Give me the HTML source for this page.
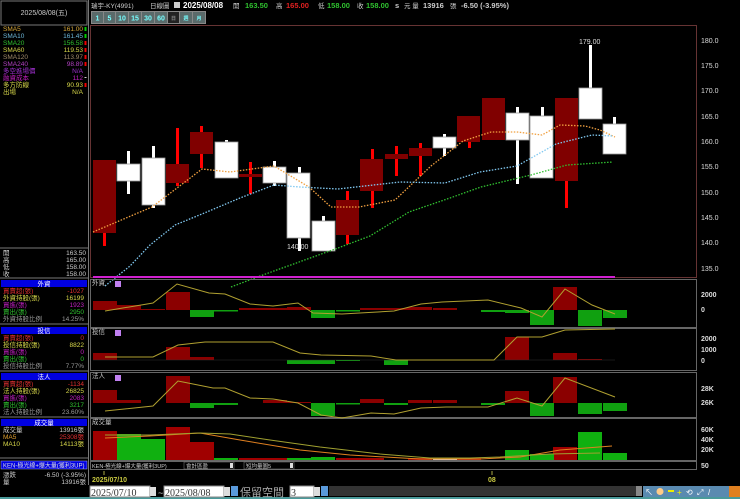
<!DOCTYPE html>
<html><head><meta charset="utf-8"><style>
body{margin:0;background:#000;width:740px;height:499px;overflow:hidden;font-family:"Liberation Sans","Noto Sans CJK TC",sans-serif;}
svg{position:absolute;left:0;top:0}
</style></head><body>
<svg width="740" height="499" viewBox="0 0 740 499" font-family="Liberation Sans, Noto Sans CJK TC, sans-serif">
<rect width="740" height="499" fill="#000"/>
<!-- left panel -->
<rect x="0" y="0" width="88" height="499" fill="#000"/>
<line x1="88.5" y1="0" x2="88.5" y2="485" stroke="#777"/>
<rect x="1" y="1" width="86" height="24" fill="none" stroke="#777"/>
<text x="44" y="15" fill="#ccc" font-size="7" text-anchor="middle">2025/08/08(五)</text>
<g font-size="6.5">
<text x="3" y="31" fill="#d9a93a">SMA5</text><text x="83" y="31" fill="#d9a93a" text-anchor="end">161.00</text><rect x="84.5" y="27" width="2" height="4" fill="#0c0"/>
<text x="3" y="38" fill="#6cb6d8">SMA10</text><text x="83" y="38" fill="#6cb6d8" text-anchor="end">161.45</text><rect x="84.5" y="34" width="2" height="4" fill="#0c0"/>
<text x="3" y="45" fill="#2fc02f">SMA20</text><text x="83" y="45" fill="#2fc02f" text-anchor="end">156.58</text><rect x="84.5" y="41" width="2" height="4" fill="#e00"/>
<text x="3" y="52" fill="#d8d84a">SMA60</text><text x="83" y="52" fill="#d8d84a" text-anchor="end">119.53</text><rect x="84.5" y="48" width="2" height="4" fill="#e00"/>
<text x="3" y="59" fill="#a08a6a">SMA120</text><text x="83" y="59" fill="#a08a6a" text-anchor="end">113.97</text><rect x="84.5" y="55" width="2" height="4" fill="#e00"/>
<text x="3" y="66" fill="#b040c0">SMA240</text><text x="83" y="66" fill="#b040c0" text-anchor="end">98.89</text><rect x="84.5" y="62" width="2" height="4" fill="#e00"/>
<text x="3" y="73" fill="#a030d0">多空進場價</text><text x="83" y="73" fill="#a030d0" text-anchor="end">N/A</text>
<text x="3" y="80" fill="#c020c0">融資成本</text><text x="83" y="80" fill="#c020c0" text-anchor="end">112</text><rect x="84.5" y="77" width="2" height="1" fill="#ccc"/>
<text x="3" y="87" fill="#d8d84a">多方防線</text><text x="83" y="87" fill="#d8d84a" text-anchor="end">90.93</text><rect x="84.5" y="83" width="2" height="4" fill="#e00"/>
<text x="3" y="94" fill="#d8d84a">出場</text><text x="83" y="94" fill="#d8d84a" text-anchor="end">N/A</text>
</g>
<line x1="0" y1="248" x2="88" y2="248" stroke="#777"/>
<g font-size="6.5" fill="#ccc">
<text x="3" y="255">開</text><text x="86" y="255" text-anchor="end">163.50</text>
<text x="3" y="262">高</text><text x="86" y="262" text-anchor="end">165.00</text>
<text x="3" y="269">低</text><text x="86" y="269" text-anchor="end">158.00</text>
<text x="3" y="276">收</text><text x="86" y="276" text-anchor="end">158.00</text>
</g>
<line x1="0" y1="278" x2="88" y2="278" stroke="#777"/>
<!-- sections -->
<g font-size="6.5">
<rect x="1" y="280" width="86" height="7" fill="#0000e0"/><text x="44" y="286" fill="#fff" text-anchor="middle">外資</text>
<text x="3" y="293" fill="#e03030">買賣超(張)</text><text x="84" y="293" fill="#e03030" text-anchor="end">-1027</text>
<text x="3" y="300" fill="#d8d84a">外資持股(張)</text><text x="84" y="300" fill="#d8d84a" text-anchor="end">16199</text>
<text x="3" y="307" fill="#c020c0">買進(張)</text><text x="84" y="307" fill="#c020c0" text-anchor="end">1923</text>
<text x="3" y="314" fill="#2fc02f">賣出(張)</text><text x="84" y="314" fill="#2fc02f" text-anchor="end">2950</text>
<text x="3" y="321" fill="#999">外資持股比例</text><text x="84" y="321" fill="#999" text-anchor="end">14.25%</text>
<line x1="0" y1="324" x2="88" y2="324" stroke="#777"/>
<rect x="1" y="327" width="86" height="7" fill="#0000e0"/><text x="44" y="333" fill="#fff" text-anchor="middle">投信</text>
<text x="3" y="340" fill="#e03030">買賣超(張)</text><text x="84" y="340" fill="#e03030" text-anchor="end">0</text>
<text x="3" y="347" fill="#d8d84a">投信持股(張)</text><text x="84" y="347" fill="#d8d84a" text-anchor="end">8822</text>
<text x="3" y="354" fill="#c020c0">買進(張)</text><text x="84" y="354" fill="#c020c0" text-anchor="end">0</text>
<text x="3" y="361" fill="#2fc02f">賣出(張)</text><text x="84" y="361" fill="#2fc02f" text-anchor="end">0</text>
<text x="3" y="368" fill="#999">投信持股比例</text><text x="84" y="368" fill="#999" text-anchor="end">7.77%</text>
<line x1="0" y1="371" x2="88" y2="371" stroke="#777"/>
<rect x="1" y="373" width="86" height="7" fill="#0000e0"/><text x="44" y="379" fill="#fff" text-anchor="middle">法人</text>
<text x="3" y="386" fill="#e03030">買賣超(張)</text><text x="84" y="386" fill="#e03030" text-anchor="end">-1134</text>
<text x="3" y="393" fill="#d8d84a">法人持股(張)</text><text x="84" y="393" fill="#d8d84a" text-anchor="end">26825</text>
<text x="3" y="400" fill="#c020c0">買進(張)</text><text x="84" y="400" fill="#c020c0" text-anchor="end">2083</text>
<text x="3" y="407" fill="#2fc02f">賣出(張)</text><text x="84" y="407" fill="#2fc02f" text-anchor="end">3217</text>
<text x="3" y="414" fill="#999">法人持股比例</text><text x="84" y="414" fill="#999" text-anchor="end">23.60%</text>
<line x1="0" y1="417" x2="88" y2="417" stroke="#777"/>
<rect x="1" y="419" width="86" height="7" fill="#0000e0"/><text x="44" y="425" fill="#fff" text-anchor="middle">成交量</text>
<text x="3" y="432" fill="#ccc">成交量</text><text x="84" y="432" fill="#ccc" text-anchor="end">13916張</text>
<text x="3" y="439" fill="#e0a030">MA5</text><text x="84" y="439" fill="#e03030" text-anchor="end">25308張</text>
<text x="3" y="446" fill="#d8d84a">MA10</text><text x="84" y="446" fill="#d8d84a" text-anchor="end">14113張</text>
<line x1="0" y1="458" x2="88" y2="458" stroke="#777"/>
<rect x="1" y="461" width="86" height="8" fill="#0000e0" stroke="#aaf" stroke-width="0.5"/><text x="3" y="467.5" fill="#ddd" font-size="6">KEN-極光線+爆大量(獲利3UP)</text>
<text x="3" y="477" fill="#ccc">漲跌</text><text x="86" y="477" fill="#ccc" text-anchor="end">-6.50 (-3.95%)</text>
<text x="3" y="484" fill="#ccc">量</text><text x="86" y="484" fill="#ccc" text-anchor="end">13916張</text>
</g>
<!-- header -->
<g font-size="7.5" font-weight="bold">
<text x="91" y="8" fill="#ccc" font-weight="normal" font-size="6.5">瑞宇-KY(4991)</text>
<text x="150" y="8" fill="#ccc" font-weight="normal" font-size="6.5">日線圖</text>
<rect x="174" y="2" width="6" height="6" fill="#ccc"/>
<text x="183" y="8" fill="#fff" font-size="8">2025/08/08</text>
<text x="233" y="8" fill="#ccc" font-weight="normal" font-size="6.5">開</text><text x="245" y="8" fill="#2fc02f">163.50</text>
<text x="276" y="8" fill="#ccc" font-weight="normal" font-size="6.5">高</text><text x="286" y="8" fill="#e02020">165.00</text>
<text x="318" y="8" fill="#ccc" font-weight="normal" font-size="6.5">低</text><text x="327" y="8" fill="#2fc02f">158.00</text>
<text x="357" y="8" fill="#ccc" font-weight="normal" font-size="6.5">收</text><text x="366" y="8" fill="#2fc02f">158.00</text>
<text x="395" y="8" fill="#ccc">s</text><text x="404" y="8" fill="#ccc" font-weight="normal" font-size="6.5">元 量</text>
<text x="423" y="8" fill="#ccc">13916</text><text x="450" y="8" fill="#ccc" font-weight="normal" font-size="6.5">張</text>
<text x="461" y="8" fill="#ccc">-6.50 (-3.95%)</text>
</g>
<rect x="91" y="11" width="115" height="13" fill="#888"/>
<g font-size="7" fill="#7ff" font-weight="bold" text-anchor="middle">
<rect x="92" y="12" width="11" height="11" fill="#5a6a6a"/><text x="97.5" y="20.5">1</text>
<rect x="104" y="12" width="11" height="11" fill="#5a6a6a"/><text x="109.5" y="20.5">5</text>
<rect x="116" y="12" width="12" height="11" fill="#5a6a6a"/><text x="122" y="20.5">10</text>
<rect x="129" y="12" width="12" height="11" fill="#5a6a6a"/><text x="135" y="20.5">15</text>
<rect x="142" y="12" width="12" height="11" fill="#5a6a6a"/><text x="148" y="20.5">30</text>
<rect x="155" y="12" width="12" height="11" fill="#5a6a6a"/><text x="161" y="20.5">60</text>
<rect x="168" y="12" width="11" height="11" fill="#222"/><text x="173.5" y="20" fill="#888" font-size="5">日</text>
<rect x="180" y="12" width="12" height="11" fill="#5a6a6a"/><text x="186" y="20" font-size="5">週</text>
<rect x="193" y="12" width="12" height="11" fill="#5a6a6a"/><text x="199" y="20" font-size="5">月</text>
</g>
<!-- main chart frame -->
<rect x="90.5" y="25.5" width="606" height="252" fill="none" stroke="#633"/>
<g font-size="7" fill="#ddd">
<text x="701" y="43">180.0</text><text x="701" y="68">175.0</text><text x="701" y="93">170.0</text>
<text x="701" y="119">165.0</text><text x="701" y="144">160.0</text><text x="701" y="169">155.0</text>
<text x="701" y="195">150.0</text><text x="701" y="220">145.0</text><text x="701" y="245">140.0</text><text x="701" y="271">135.0</text>
</g>
<!-- wicks -->
<g fill="#f00">
<rect x="103" y="162" width="3" height="84"/>
<rect x="176" y="128" width="3" height="58"/>
<rect x="200" y="126" width="3" height="42"/>
<rect x="249" y="162" width="3" height="32"/>
<rect x="346" y="191" width="3" height="53"/>
<rect x="371" y="149" width="3" height="59"/>
<rect x="395" y="146" width="3" height="30"/>
<rect x="419" y="143" width="3" height="33"/>
<rect x="468" y="140" width="3" height="8"/>
<rect x="565" y="160" width="3" height="48"/>
</g>
<g fill="#fff">
<rect x="127" y="151" width="3" height="43"/>
<rect x="152" y="146" width="3" height="62"/>
<rect x="225" y="140" width="3" height="10"/>
<rect x="273" y="161" width="3" height="25"/>
<rect x="298" y="167" width="3" height="84"/>
<rect x="322" y="216" width="3" height="10"/>
<rect x="443" y="134" width="3" height="22"/>
<rect x="516" y="107" width="3" height="77"/>
<rect x="541" y="107" width="3" height="10"/>
<rect x="589" y="45" width="3" height="44"/>
<rect x="613" y="117" width="3" height="8"/>
</g>
<!-- bodies -->
<g fill="#800000">
<rect x="93" y="160" width="23" height="73"/>
<rect x="166" y="164" width="23" height="19"/>
<rect x="190" y="132" width="23" height="22"/>
<rect x="239" y="174" width="23" height="3"/>
<rect x="336" y="200" width="23" height="35"/>
<rect x="360" y="159" width="23" height="32"/>
<rect x="385" y="154" width="23" height="5"/>
<rect x="409" y="148" width="23" height="8"/>
<rect x="457" y="116" width="23" height="26"/>
<rect x="482" y="98" width="23" height="42"/>
<rect x="555" y="98" width="23" height="83"/>
</g>
<g fill="#fff" stroke="#999" stroke-width="0.8">
<rect x="117" y="164" width="23" height="17"/>
<rect x="142" y="158" width="23" height="47"/>
<rect x="215" y="142" width="23" height="36"/>
<rect x="263" y="167" width="23" height="16"/>
<rect x="287" y="173" width="23" height="65"/>
<rect x="312" y="221" width="23" height="30"/>
<rect x="433" y="137" width="23" height="11"/>
<rect x="506" y="113" width="23" height="27"/>
<rect x="530" y="116" width="23" height="62"/>
<rect x="579" y="88" width="23" height="31"/>
<rect x="603" y="124" width="23" height="30"/>
</g>
<text x="579" y="44" fill="#ddd" font-size="7">179.00</text>
<text x="287" y="249" fill="#ddd" font-size="7">140.00</text>
<!-- MAs -->
<g fill="none" stroke-width="1.3" stroke-dasharray="1.5 1.5">
<polyline stroke="#f0a040" points="93,232 152,207 202,169 230,172 274,166 309,187 331,207 359,207 395,200 431,166 463,141 491,132 517,132 542,135 560,125 585,126 600,130 615,137"/>
<polyline stroke="#80c8f0" points="105,286 130,266 150,245 175,225 202,214 240,198 274,185 300,187 338,189 400,182 445,183 480,172 517,166 556,144 592,135 613,136"/>
<polyline stroke="#30c030" points="231,287 260,276 288,266 338,248 370,236 409,212 450,198 481,187 531,175 567,165 613,162"/>
</g>
<rect x="93" y="276" width="522" height="2" fill="#d020d0"/>
<!-- sub panels -->
<g stroke="#666" fill="none">
<rect x="90.5" y="279.5" width="606" height="48"/>
<rect x="90.5" y="328.5" width="606" height="42"/>
<rect x="90.5" y="372.5" width="606" height="45"/>
<rect x="90.5" y="418.5" width="606" height="42"/>
</g>
<g font-size="6.5" fill="#ccc">
<text x="92" y="285">外資</text><rect x="115" y="281" width="6" height="6" fill="#c080f0"/>
<text x="92" y="334">投信</text><rect x="115" y="330" width="6" height="6" fill="#c080f0"/>
<text x="92" y="378">法人</text><rect x="115" y="375" width="6" height="6" fill="#c080f0"/>
<text x="92" y="424">成交量</text>
</g>
<g font-size="7" fill="#ddd" font-weight="bold">
<text x="701" y="297">2000</text><text x="701" y="312">0</text>
<text x="701" y="341">2000</text><text x="701" y="352">1000</text><text x="701" y="363">0</text>
<text x="701" y="391">28K</text><text x="701" y="405">26K</text>
<text x="701" y="432">60K</text><text x="701" y="442">40K</text><text x="701" y="452">20K</text><text x="701" y="468">50</text>
</g>
<!-- 外資 bars, zero 310 -->
<g fill="#8b0000">
<rect x="93" y="301" width="24" height="9"/><rect x="117" y="305" width="24" height="5"/><rect x="141" y="309" width="24" height="1"/>
<rect x="166" y="292" width="24" height="18"/><rect x="239" y="308" width="24" height="2"/><rect x="263" y="308" width="24" height="2"/>
<rect x="287" y="307" width="24" height="3"/><rect x="360" y="308" width="24" height="2"/><rect x="384" y="308" width="24" height="2"/>
<rect x="408" y="307" width="24" height="3"/><rect x="433" y="308" width="24" height="2"/><rect x="553" y="287" width="24" height="23"/>
</g>
<g fill="#10a010">
<rect x="190" y="310" width="24" height="7"/><rect x="214" y="310" width="24" height="1.5"/><rect x="311" y="310" width="24" height="8"/>
<rect x="336" y="310" width="24" height="1.5"/><rect x="481" y="310" width="24" height="2"/><rect x="505" y="310" width="24" height="3"/>
<rect x="530" y="310" width="24" height="15"/><rect x="578" y="310" width="24" height="16"/><rect x="603" y="310" width="24" height="8"/>
</g>
<polyline fill="none" stroke="#b0a030" stroke-width="1" points="105,311 153,303 177,284 209,293 225,294 250,304 273,306 298,303 313,313 342,314 394,311 421,304 442,302 488,300 521,308 542,317 565,289 592,305 615,314"/>
<!-- 投信 zero 360 -->
<g fill="#8b0000">
<rect x="93" y="353" width="24" height="7"/><rect x="166" y="347" width="24" height="13"/><rect x="190" y="357" width="24" height="3"/>
<rect x="505" y="337" width="24" height="23"/><rect x="553" y="353" width="24" height="7"/><rect x="578" y="359" width="24" height="1"/>
</g>
<g fill="#10a010">
<rect x="287" y="360" width="24" height="4"/><rect x="311" y="360" width="24" height="4"/><rect x="336" y="360" width="24" height="1"/>
<rect x="384" y="360" width="24" height="5"/>
</g>
<line x1="93" y1="360" x2="615" y2="360" stroke="#333" stroke-width="0.6"/>
<polyline fill="none" stroke="#b0a030" stroke-width="1" points="105,357 153,357 178,345 205,342 273,342 300,353 321,355 371,356 396,360 494,360 517,337 542,337 565,330 615,329"/>
<!-- 法人 zero 403 -->
<g fill="#8b0000">
<rect x="93" y="390" width="24" height="13"/><rect x="117" y="400" width="24" height="3"/><rect x="166" y="376" width="24" height="27"/>
<rect x="263" y="400" width="24" height="3"/><rect x="287" y="402" width="24" height="1"/><rect x="360" y="399" width="24" height="4"/>
<rect x="408" y="400" width="24" height="3"/><rect x="433" y="400" width="24" height="3"/><rect x="505" y="391" width="24" height="12"/>
<rect x="553" y="377" width="24" height="26"/>
</g>
<g fill="#10a010">
<rect x="190" y="403" width="24" height="5"/><rect x="214" y="403" width="24" height="2"/><rect x="311" y="403" width="24" height="13"/>
<rect x="336" y="403" width="24" height="1.5"/><rect x="384" y="403" width="24" height="2"/><rect x="481" y="403" width="24" height="2"/>
<rect x="530" y="403" width="24" height="13"/><rect x="578" y="403" width="24" height="11"/><rect x="603" y="403" width="24" height="8"/>
</g>
<polyline fill="none" stroke="#b0a030" stroke-width="1" points="105,411 153,406 178,381 213,388 225,388 250,398 273,399 298,403 321,415 342,418 371,413 394,414 421,408 446,407 488,407 517,398 542,406 565,378 615,397"/>
<!-- 成交量 bottom 460 -->
<g fill="#a00000">
<rect x="93" y="431" width="24" height="29"/><rect x="166" y="427" width="24" height="33"/><rect x="190" y="442" width="24" height="18"/>
<rect x="239" y="458" width="24" height="2"/><rect x="263" y="458" width="24" height="2"/><rect x="336" y="458" width="24" height="2"/>
<rect x="360" y="458" width="24" height="2"/><rect x="408" y="458" width="24" height="2"/><rect x="457" y="458" width="24" height="2"/>
<rect x="553" y="447" width="24" height="13"/>
</g>
<g fill="#10b010">
<rect x="117" y="434" width="24" height="26"/><rect x="141" y="439" width="24" height="21"/><rect x="214" y="458" width="24" height="2"/>
<rect x="287" y="458" width="24" height="2"/><rect x="311" y="457" width="24" height="3"/><rect x="505" y="450" width="24" height="10"/>
<rect x="530" y="454" width="24" height="6"/><rect x="578" y="432" width="24" height="28"/><rect x="603" y="453" width="24" height="7"/>
</g>
<rect x="433" y="458" width="24" height="2" fill="#eee"/>
<polyline fill="none" stroke="#e08020" stroke-width="1" points="105,438 150,436 200,433 240,440 300,450 350,455 420,459 480,459 520,457 560,450 612,446"/>
<polyline fill="none" stroke="#a0a030" stroke-width="1" points="105,435 150,435 200,433 230,434 270,440 320,447 380,454 430,458 470,458 500,457 550,454 600,453"/>
<!-- toolbar row -->
<rect x="90.5" y="461.5" width="606" height="8" fill="#000" stroke="#666"/>
<g font-size="5.5" fill="#ccc">
<text x="92" y="468">KEN-極光線+爆大量(獲利3UP)</text>
<rect x="184" y="462" width="50" height="7" fill="#000" stroke="#888" stroke-width="0.5"/><text x="186" y="468">會計區盈</text><rect x="230" y="463" width="3" height="5" fill="#ddd"/>
<rect x="244" y="462" width="50" height="7" fill="#000" stroke="#888" stroke-width="0.5"/><text x="246" y="468">短均量圖5</text><rect x="290" y="463" width="3" height="5" fill="#ddd"/>
</g>
<line x1="104" y1="471" x2="104" y2="475" stroke="#aa4"/>
<line x1="492" y1="471" x2="492" y2="475" stroke="#aa4"/>
<text x="92" y="482" fill="#c8c840" font-size="7" font-weight="bold">2025/07/10</text>
<text x="488" y="482" fill="#c8c840" font-size="7" font-weight="bold">08</text>
<!-- bottom inputs -->
<rect x="0" y="497" width="740" height="2" fill="#4a9a9a"/>
<rect x="90" y="486" width="60" height="11" fill="#fff" stroke="#888"/><text x="91" y="496" font-size="10" font-family="Liberation Serif, serif" fill="#333">2025/07/10</text>
<rect x="150" y="487" width="6" height="9" fill="#ddd"/>
<text x="158" y="496" fill="#ccc" font-size="9">~</text>
<rect x="164" y="486" width="60" height="11" fill="#fff" stroke="#888"/><text x="165" y="496" font-size="10" font-family="Liberation Serif, serif" fill="#333">2025/08/08</text>
<rect x="224" y="487" width="6" height="9" fill="#ddd"/>
<rect x="231" y="486" width="7" height="10" fill="#5a9adc"/>
<text x="240" y="496" fill="#aaa" font-size="11">保留空間</text>
<rect x="290" y="486" width="24" height="11" fill="#fff" stroke="#888"/><text x="291" y="496" font-size="10" fill="#333" font-family="Liberation Serif, serif">3</text>
<rect x="314" y="487" width="6" height="9" fill="#ddd"/>
<rect x="321" y="486" width="7" height="10" fill="#5a9adc"/>
<rect x="329" y="486" width="308" height="10" fill="#333"/>
<rect x="636" y="486" width="6" height="10" fill="#888"/>
<rect x="643" y="486" width="97" height="11" fill="#5a8ab0"/>
<g font-size="8" fill="#fff">
<text x="645" y="495">↖</text><circle cx="660" cy="491.5" r="3.5" fill="#fc8"/><rect x="668" y="490" width="6" height="2" fill="#ee0"/>
<text x="677" y="495" fill="#ee0">+</text><text x="686" y="495">⟲</text><text x="697" y="495">⤢</text><text x="708" y="495">/</text>
<rect x="729" y="486" width="11" height="11" fill="#e08020"/>
</g>
</svg>
</body></html>
